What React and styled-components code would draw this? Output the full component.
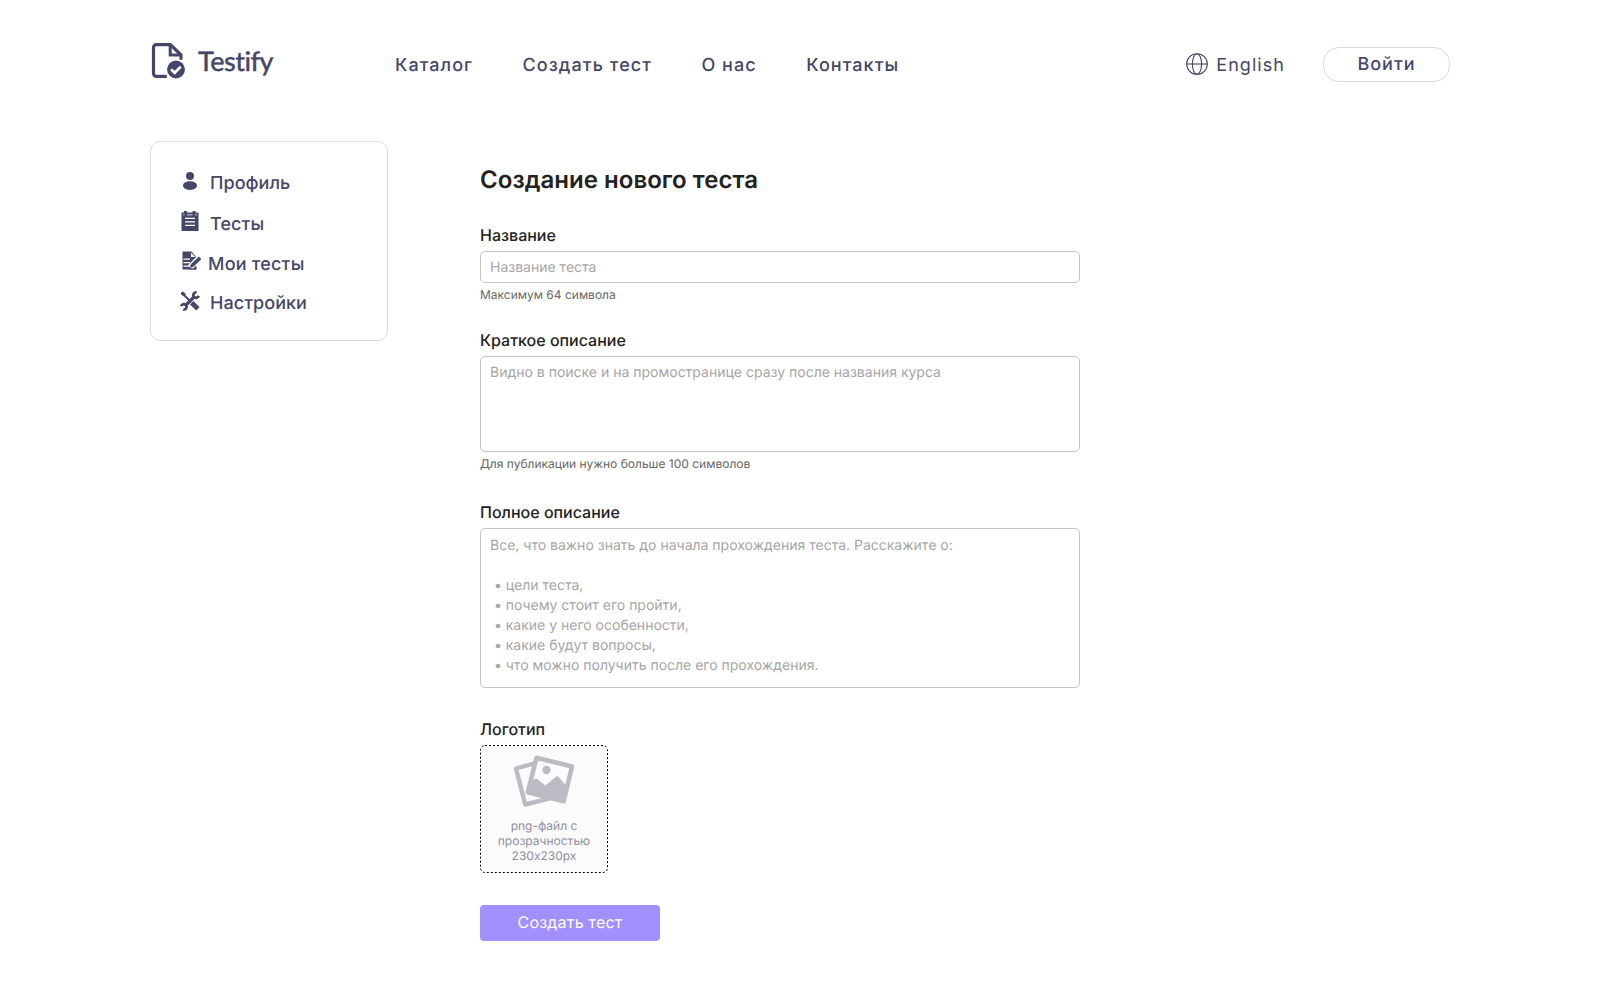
import React from 'react';
import styled, { createGlobalStyle } from 'styled-components';

const ink = '#454768';

const GlobalStyle = createGlobalStyle`
  * { box-sizing: border-box; }
  body {
    margin: 0;
    background: #fff;
    color: #222;
    font-family: Inter, "Liberation Sans", sans-serif;
    text-rendering: geometricPrecision;
  }
  button, input, textarea { font-family: inherit; text-rendering: inherit; }
`;

const Page = styled.div`
  width: 1300px;
  height: 998px;
  margin: 0 auto;
`;

const Header = styled.header`
  display: flex;
  align-items: center;
  height: 129px;
  color: ${ink};
`;

const Logo = styled.a`
  display: flex;
  align-items: center;
  width: 245px;
  gap: 12px;
  padding-left: 1px;
  margin-top: -8px;
  svg { display: block; flex: none; }
`;

const LogoName = styled.span`
  font: 500 27px/32px Lato, sans-serif;
  -webkit-text-stroke: 0.3px ${ink};
  letter-spacing: -0.5px;
`;

const Nav = styled.nav`
  display: flex;
  gap: 49.5px;
  flex: 1;
`;

const NavLink = styled.a`
  margin-top: 3px;
  font-size: 18px;
  line-height: 24px;
  letter-spacing: 1.05px;
  font-weight: ${(p) => p.$weight || 470};
`;

const Language = styled.a`
  display: flex;
  align-items: center;
  gap: 8px;
  margin-right: 38px;
  svg { margin-bottom: 2px; }
`;

const LoginButton = styled.button`
  width: 127px;
  height: 35px;
  margin-bottom: 1px;
  padding: 1px 0 0;
  border: 1px solid #d9dae2;
  border-radius: 16px;
  background: #fff;
  color: ${ink};
  font-size: 18px;
  font-weight: 500;
  line-height: 24px;
  letter-spacing: 1px;
`;

const Body = styled.div`
  display: flex;
  align-items: flex-start;
  padding-top: 12px;
`;

const Sidebar = styled.aside`
  width: 238px;
  height: 200px;
  padding: 21px 28px 0;
  border: 1px solid #dcdce3;
  border-radius: 10px;
`;

const MenuItem = styled.a`
  display: flex;
  align-items: center;
  gap: ${(p) => p.$gap || 9}px;
  height: ${(p) => p.$height || 40}px;
  color: ${ink};
  font-size: 18px;
  font-weight: 470;
  letter-spacing: ${(p) => p.$spacing || 0.05}px;
  svg { margin-bottom: ${(p) => p.$lift || 6}px; flex: none; }
`;

const Form = styled.form`
  width: 600px;
  margin: 23px 0 0 92px;
`;

const Title = styled.h1`
  margin: 0 0 29px;
  font-size: 24px;
  line-height: 32px;
  font-weight: 600;
  letter-spacing: 0.04px;
`;

const Field = styled.div`
  display: flex;
  flex-direction: column;
  align-items: flex-start;
  margin-bottom: ${(p) => p.$after}px;
`;

const Label = styled.label`
  margin-bottom: 6px;
  font-size: 16px;
  line-height: 20px;
  font-weight: 470;
`;

const Input = styled.input`
  display: block;
  width: 600px;
  height: 32px;
  padding: 0 9px;
  border: 1px solid #c4c4c4;
  border-radius: 5px;
  outline: none;
  font-size: 14px;
  line-height: 20px;
  &::placeholder { color: #a6a6a6; opacity: 1; }
`;

const TextArea = styled.textarea`
  display: block;
  width: 600px;
  height: ${(p) => p.$height}px;
  padding: ${(p) => p.$top}px 9px 0;
  border: 1px solid #c4c4c4;
  border-radius: 5px;
  outline: none;
  resize: none;
  overflow: hidden;
  font-size: 14px;
  line-height: 20px;
  &::placeholder { color: #a6a6a6; opacity: 1; }
`;

const Hint = styled.span`
  margin-top: 4px;
  font-size: 12px;
  line-height: 16px;
  color: #666;
`;

const Upload = styled.div`
  position: relative;
  display: flex;
  flex-direction: column;
  align-items: center;
  width: 128px;
  height: 128px;
  padding-top: 10px;
  border-radius: 5px;
  background: #fbfbfc;
`;

const DashedOutline = styled.svg`
  position: absolute;
  inset: 0;
`;

const UploadText = styled.span`
  margin-top: 9px;
  width: 110px;
  text-align: center;
  font-size: 12px;
  line-height: 15px;
  color: #8f8f9f;
`;

const Submit = styled.button`
  display: block;
  width: 180px;
  height: 36px;
  padding: 0 0 2px;
  border: 0;
  border-radius: 4px;
  background: #a390ff;
  color: #fff;
  font-size: 16px;
  letter-spacing: 0.2px;
`;

const LogoIcon = () => (
  <svg width="35" height="36" viewBox="0 0 35 36" fill="none" stroke={ink}>
    <path d="M14.5 33.4H5.5a3 3 0 0 1-3-3V4.600a3 3 0 0 1 3-3H19.500L30 12V15.500" strokeWidth="3.200" strokeLinejoin="round" strokeLinecap="round" />
    <path d="M19.200 2V12H30" strokeWidth="3" />
    <circle cx="25" cy="26.500" r="8.900" fill={ink} stroke="none" />
    <path d="M20.200 26.500l3.500 3.300 6-6.200" stroke="#fff" strokeWidth="2.800" />
  </svg>
);

const GlobeIcon = () => (
  <svg width="22" height="22" viewBox="0 0 22 22" fill="none" stroke={ink} strokeWidth="1.100">
    <circle cx="11" cy="11" r="10.300" />
    <ellipse cx="11" cy="11" rx="4.600" ry="10.300" />
    <path d="M.7 11h20.600" />
  </svg>
);

const UserIcon = () => (
  <svg width="22" height="22" viewBox="0 0 22 22" fill={ink}>
    <circle cx="11" cy="6" r="4" />
    <path d="M4 15.600C4 12.800 7 11.200 11 11.200s7 1.600 7 4.400C18 18.400 15 20 11 20s-7-1.600-7-4.400Z" />
  </svg>
);

const ClipboardIcon = () => (
  <svg width="22" height="22" viewBox="0 0 22 22" fill={ink}>
    <path fillRule="evenodd" d="M2.500 2.500h2.500V1h3v1.500h5.500V1h3v1.500h3V21h-17ZM4 4.500v.7h14v-.7h-2v.7h-2.500v-.7H8v.7H5.500v-.7ZM6 7.800V9h10V7.800ZM6 11.300v1.200h10v-1.200ZM6 14.800V16h10v-1.200Z" />
  </svg>
);

const EditIcon = () => (
  <svg width="22" height="22" viewBox="0 0 22 22">
    <path fill={ink} d="M3.500 1.500h9l4.500 5v13H3.500Z" />
    <path fill="#fff" d="M12 2.500v4.500h4.500ZM4.500 8.500H11v1.200H4.500ZM4.500 12h6.500v1.200H4.500ZM4.500 15.500H10v1.200H4.500Z" />
    <path d="M11 17.600L20.500 7.800" stroke="#fff" strokeWidth="6" />
    <path fill={ink} d="M10.800 18l1.200-4 8-7.500 2.300 2.600-7.500 7.500Z" />
    <path stroke={ink} strokeWidth="1.300" d="M10 18.900h7v-2.500" fill="none" />
  </svg>
);

const ToolsIcon = () => (
  <svg width="22" height="22" viewBox="0 0 22 22" fill="none" stroke={ink}>
    <path d="M2 2.500l2-1 2.800 2.500-2.300 2.300L2 4.500Z" fill={ink} stroke="none" />
    <path d="M4.500 4.500l7.500 7.500" strokeWidth="2" />
    <path d="M12.700 12.700l6.200 6.200" strokeWidth="4.800" />
    <path d="M6 16l10-10" strokeWidth="3.200" />
    <path d="M17.600 2.500a2.700 2.700 0 1 0 2 3.200M4.200 19.500a2.700 2.700 0 1 0-2-3.200" strokeWidth="2.800" />
  </svg>
);

const PicturesIcon = () => (
  <svg width="62" height="54" viewBox="0 0 62 54" fill="none" stroke="#bbbbc3" strokeLinejoin="round">
    <path d="M21 8.500L3 13.500 12.200 49.500 37 43.300" strokeWidth="4.400" />
    <path d="M23.500 2.800L59 11.500 50.700 46.200 14.800 37.200Z" strokeWidth="4.600" fill="#fbfbfc" />
    <circle cx="33.500" cy="15" r="4.200" fill="#bbbbc3" stroke="none" />
    <path d="M17 29l4-4.500q2-2 4 0l7.500 6 10-8.500q2-1.500 3.500.5l8 9-4 14.500L15 37.600Z" fill="#bbbbc3" stroke="none" />
  </svg>
);

const fullPlaceholder = [
  'Все, что важно знать до начала прохождения теста. Расскажите о:',
  '',
  ' • цели теста,',
  ' • почему стоит его пройти,',
  ' • какие у него особенности,',
  ' • какие будут вопросы,',
  ' • что можно получить после его прохождения.',
].join('\n');

export default function App() {
  return (
    <>
      <GlobalStyle />
      <Page>
        <Header>
          <Logo><LogoIcon /><LogoName>Testify</LogoName></Logo>
          <Nav>
            <NavLink>Каталог</NavLink>
            <NavLink>Создать тест</NavLink>
            <NavLink>О нас</NavLink>
            <NavLink>Контакты</NavLink>
          </Nav>
          <Language><GlobeIcon /><NavLink $weight={400}>English</NavLink></Language>
          <LoginButton type="button">Войти</LoginButton>
        </Header>
        <Body>
          <Sidebar>
            <MenuItem $height={41}><UserIcon />Профиль</MenuItem>
            <MenuItem><ClipboardIcon />Тесты</MenuItem>
            <MenuItem $gap={7} $spacing={0.2}><EditIcon />Мои тесты</MenuItem>
            <MenuItem $height={38} $lift={4}><ToolsIcon />Настройки</MenuItem>
          </Sidebar>
          <Form>
            <Title>Создание нового теста</Title>
            <Field $after={27}>
              <Label>Название</Label>
              <Input placeholder="Название теста" />
              <Hint>Максимум 64 символа</Hint>
            </Field>
            <Field $after={30}>
              <Label>Краткое описание</Label>
              <TextArea $height={96} $top={6} placeholder="Видно в поиске и на промостранице сразу после названия курса" />
              <Hint>Для публикации нужно больше 100 символов</Hint>
            </Field>
            <Field $after={31}>
              <Label>Полное описание</Label>
              <TextArea $height={160} $top={7} placeholder={fullPlaceholder} />
            </Field>
            <Field $after={32}>
              <Label>Логотип</Label>
              <Upload>
                <DashedOutline width="128" height="128" viewBox="0 0 128 128">
                  <rect x=".5" y=".5" width="127" height="127" rx="4.500" fill="none" stroke="#000" strokeDasharray="2 2" />
                </DashedOutline>
                <PicturesIcon />
                <UploadText>png-файл с прозрачностью 230x230px</UploadText>
              </Upload>
            </Field>
            <Submit type="button">Создать тест</Submit>
          </Form>
        </Body>
      </Page>
    </>
  );
}
